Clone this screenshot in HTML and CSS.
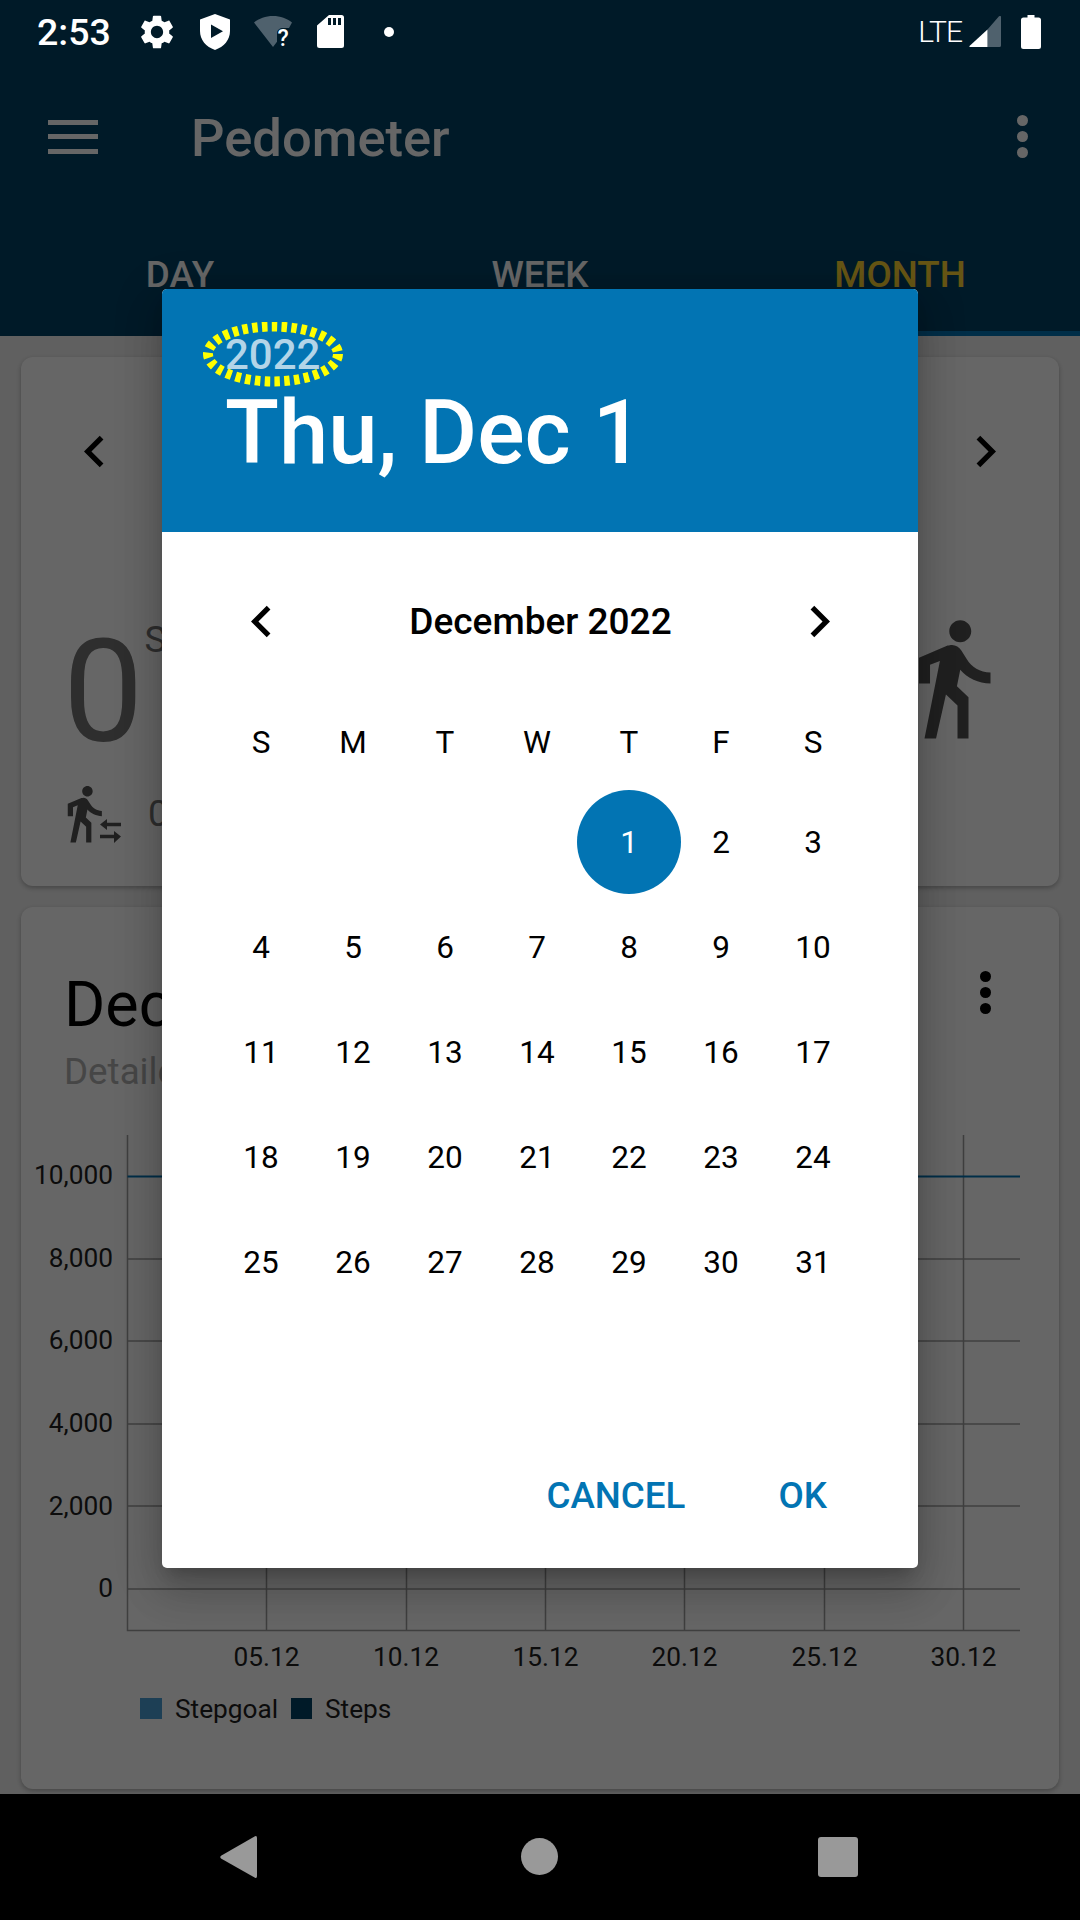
FILE: index.html
```html
<!DOCTYPE html>
<html lang="en">
<head>
<meta charset="utf-8">
<title>Pedometer</title>
<link rel="stylesheet" href="styles.css">
</head>
<body>
<div class="screen">
  <header class="appbar">
    <div class="status">
      <span class="clock">2:53</span>
      <svg class="st-gear" viewBox="2.6 2.6 18.8 18.8"><path fill="#fff" d="M19.14 12.94c.04-.3.06-.61.06-.94 0-.32-.02-.64-.07-.94l2.03-1.58c.18-.14.23-.41.12-.61l-1.92-3.32c-.12-.22-.37-.29-.59-.22l-2.39.96c-.5-.38-1.03-.7-1.62-.94l-.36-2.54c-.04-.24-.24-.41-.48-.41h-3.84c-.24 0-.43.17-.47.41l-.36 2.54c-.59.24-1.13.57-1.62.94l-2.39-.96c-.22-.08-.47 0-.59.22L2.74 8.87c-.12.21-.08.47.12.61l2.03 1.58c-.05.3-.09.63-.09.94s.02.64.07.94l-2.03 1.58c-.18.14-.23.41-.12.61l1.92 3.32c.12.22.37.29.59.22l2.39-.96c.5.38 1.03.7 1.62.94l.36 2.54c.05.24.24.41.48.41h3.84c.24 0 .44-.17.47-.41l.36-2.54c.59-.24 1.13-.56 1.62-.94l2.39.96c.22.08.47 0 .59-.22l1.92-3.32c.12-.22.07-.47-.12-.61l-2.01-1.58zM12 15.6c-1.98 0-3.6-1.62-3.6-3.6s1.62-3.6 3.6-3.6 3.6 1.62 3.6 3.6-1.62 3.6-3.6 3.6z"/></svg>
      <svg class="st-shield" viewBox="0 0 30 36"><path fill="#fff" fill-rule="evenodd" d="M15 0 30 5.5V17c0 9-6 15.700-15 19C6 32.700 0 26 0 17V5.500zM11 10.500V24l12-6.750z"/></svg>
      <svg class="st-wifi" viewBox="0 0 38 31"><path fill="#4f616d" d="M19 0C11.500 0 5 2.600 0 6.500L19 31l4-5.200V17c0-3 3-5 6-5h6L38 6.500C33 2.600 26.500 0 19 0z"/><text class="st-q" x="23.500" y="30">?</text></svg>
      <svg class="st-sd" viewBox="0 0 27 33"><path fill="#fff" fill-rule="evenodd" d="M12 0h12.500A2.500 2.500 0 0 1 27 2.500V30.500A2.500 2.500 0 0 1 24.500 33H2.500A2.500 2.500 0 0 1 0 30.500V10.500zM11 3v7h3V3zM16 3v7h3V3zM21 3v7h3V3z"/></svg>
      <span class="st-dot"></span>
      <span class="lte">LTE</span>
      <svg class="st-signal" viewBox="0 0 32 31"><path fill="#4f616d" d="M32 0V29.500A1.500 1.500 0 0 1 30.500 31H18.500V13.500L30 .3Q32-.6 32 1z"/><path fill="#fff" d="M18.500 13.500V31H1Q0 31 .5 30z"/></svg>
      <svg class="st-batt" viewBox="0 0 20 34"><path fill="#fff" d="M6.500 0h7v2.500h4A2.500 2.500 0 0 1 20 5v26.500a2.500 2.500 0 0 1-2.500 2.500h-15A2.500 2.500 0 0 1 0 31.500V5a2.500 2.500 0 0 1 2.500-2.500h4z"/></svg>
    </div>
    <div class="toolbar">
      <span class="burger"><i></i><i></i><i></i></span>
      <h1 class="title">Pedometer</h1>
      <span class="kebab kebab-light"><i></i><i></i><i></i></span>
    </div>
    <nav class="tabs">
      <span class="tab">DAY</span>
      <span class="tab">WEEK</span>
      <span class="tab tab-active">MONTH</span>
    </nav>
  </header>

  <main class="content">
    <section class="card card-summary">
      <div class="pager">
        <svg class="chev" viewBox="0 0 24 24"><path d="M15.410 7.410L14 6l-6 6 6 6 1.410-1.410L10.830 12z"/></svg>
        <svg class="chev" viewBox="0 0 24 24"><path d="M8.590 16.590L10 18l6-6-6-6-1.410 1.410L13.170 12z"/></svg>
      </div>
      <div class="summary">
        <div class="summary-main">
          <div class="count-row">
            <span class="count">0</span>
            <span class="count-unit">Steps</span>
          </div>
          <div class="distance-row">
            <svg class="walk-small" viewBox="0 0 72 63"><g transform="scale(2.625)"><path d="M13.500 5.500c1.100 0 2-.9 2-2s-.9-2-2-2-2 .9-2 2 .9 2 2 2zM9.800 8.900L7 23h2.100l1.800-8 2.100 2v6h2v-7.500l-2.100-2 .6-3C14.800 12 16.800 13 19 13v-2c-1.900 0-3.500-1-4.300-2.400l-1-1.600c-.4-.6-1-1-1.700-1-.3 0-.5.1-.8.1L6 8.300V13h2V9.600l1.800-.7"/></g><path d="M48 42.500 55 37v3.800H69v3.500H55V48zM69 54.500 62 49v3.800H48v3.500H62V61z"/></svg>
            <span class="distance">0 km</span>
          </div>
        </div>
        <svg class="walk-large" viewBox="0 0 24 24"><path d="M13.500 5.500c1.100 0 2-.9 2-2s-.9-2-2-2-2 .9-2 2 .9 2 2 2zM9.800 8.900L7 23h2.100l1.800-8 2.100 2v6h2v-7.500l-2.100-2 .6-3C14.800 12 16.800 13 19 13v-2c-1.900 0-3.500-1-4.300-2.400l-1-1.600c-.4-.6-1-1-1.700-1-.3 0-.5.1-.8.1L6 8.300V13h2V9.600l1.800-.7"/></svg>
      </div>
    </section>

    <section class="card card-chart">
      <div class="chart-head">
        <div>
          <h2 class="chart-title">December 2022</h2>
          <p class="chart-sub">Detailed overview</p>
        </div>
        <span class="kebab kebab-dark"><i></i><i></i><i></i></span>
      </div>
      <svg class="chart" viewBox="21 1120 1038 620">
        <g class="grid">
          <path d="M127.500 1259H1020M127.500 1341H1020M127.500 1424H1020M127.500 1506H1020M127.500 1589H1020"/>
          <path d="M266.500 1135V1630M406.500 1135V1630M545.500 1135V1630M684.500 1135V1630M824.500 1135V1630M963.500 1135V1630"/>
          <path d="M127.500 1135V1630.500H1020"/>
        </g>
        <path class="goal" d="M127.500 1176.500H1020"/>
        <g class="axis-y">
          <text x="113" y="1184">10,000</text>
          <text x="113" y="1267">8,000</text>
          <text x="113" y="1349">6,000</text>
          <text x="113" y="1432">4,000</text>
          <text x="113" y="1515">2,000</text>
          <text x="113" y="1597">0</text>
        </g>
        <g class="axis-x">
          <text x="266.500" y="1666">05.12</text>
          <text x="406" y="1666">10.12</text>
          <text x="545.500" y="1666">15.12</text>
          <text x="684.500" y="1666">20.12</text>
          <text x="824.500" y="1666">25.12</text>
          <text x="963.500" y="1666">30.12</text>
        </g>
        <rect class="lg-goal" x="140" y="1698" width="22" height="21"/>
        <text class="lg" x="175" y="1718">Stepgoal</text>
        <rect class="lg-steps" x="291" y="1698" width="21" height="21"/>
        <text class="lg" x="325" y="1718">Steps</text>
      </svg>
    </section>
  </main>

  <div class="scrim"></div>

  <div class="dialog" role="dialog">
    <div class="dlg-head">
      <span class="dlg-year">2022</span>
      <span class="dlg-date">Thu, Dec 1</span>
      <svg class="dlg-mark" viewBox="0 0 140 65"><ellipse cx="70" cy="32" rx="65" ry="27.500"/></svg>
    </div>
    <div class="dlg-body">
      <div class="cal-head">
        <svg class="chev" viewBox="0 0 24 24"><path d="M15.410 7.410L14 6l-6 6 6 6 1.410-1.410L10.830 12z"/></svg>
        <span class="cal-month">December 2022</span>
        <svg class="chev" viewBox="0 0 24 24"><path d="M8.590 16.590L10 18l6-6-6-6-1.410 1.410L13.170 12z"/></svg>
      </div>
      <div class="cal-grid">
        <span class="cell">S</span><span class="cell">M</span><span class="cell">T</span><span class="cell">W</span><span class="cell">T</span><span class="cell">F</span><span class="cell">S</span>
        <span class="cell"></span><span class="cell"></span><span class="cell"></span><span class="cell"></span><span class="cell"><b class="sel">1</b></span><span class="cell">2</span><span class="cell">3</span>
        <span class="cell">4</span><span class="cell">5</span><span class="cell">6</span><span class="cell">7</span><span class="cell">8</span><span class="cell">9</span><span class="cell">10</span>
        <span class="cell">11</span><span class="cell">12</span><span class="cell">13</span><span class="cell">14</span><span class="cell">15</span><span class="cell">16</span><span class="cell">17</span>
        <span class="cell">18</span><span class="cell">19</span><span class="cell">20</span><span class="cell">21</span><span class="cell">22</span><span class="cell">23</span><span class="cell">24</span>
        <span class="cell">25</span><span class="cell">26</span><span class="cell">27</span><span class="cell">28</span><span class="cell">29</span><span class="cell">30</span><span class="cell">31</span>
      </div>
      <div class="dlg-actions">
        <span class="btn btn-cancel">CANCEL</span>
        <span class="btn">OK</span>
      </div>
    </div>
  </div>

  <footer class="navbar">
    <svg class="nav-back" viewBox="0 0 37 42"><path d="M35 0.300Q37-.5 37 2V40Q37 42.500 35 41.700L1 22.500Q-.5 21 1 19.700z"/></svg>
    <span class="nav-home"></span>
    <span class="nav-recent"></span>
  </footer>
</div>
</body>
</html>
```

FILE: styles.css
```css
* { box-sizing: border-box; }
html, body { margin: 0; padding: 0; }
body { font-family: Roboto, "Liberation Sans", sans-serif; background: #000; }
h1, h2, p { margin: 0; font-weight: inherit; }

.screen {
  position: relative;
  width: 1080px;
  height: 1920px;
  overflow: hidden;
  display: flex;
  flex-direction: column;
  background: #f0f0f0;
}

/* app bar */
.appbar { height: 336px; background: #004165; flex: none; display: flex; flex-direction: column; }
.status {
  position: relative;
  z-index: 3;
  height: 63px;
  flex: none;
  display: flex;
  align-items: center;
  padding: 0 39px 0 37px;
  color: #fff;
}
.clock { font-size: 37.500px; font-weight: 500; width: 71px; white-space: nowrap; }
.st-gear { width: 32px; height: 34px; margin-left: 33px; }
.st-shield { width: 30px; height: 36px; margin-left: 27px; }
.st-wifi { width: 38px; height: 31px; margin-left: 24px; }
.st-q { font-size: 23px; font-weight: 500; fill: #fff; }
.st-sd { width: 27px; height: 33px; margin-left: 25px; }
.st-dot { width: 10px; height: 10px; border-radius: 50%; background: #fff; margin-left: 40px; }
.lte { margin-left: auto; font-size: 30px; font-weight: 300; line-height: 1; letter-spacing: -1px; }
.st-signal { width: 32px; height: 31px; margin-left: 7px; }
.st-batt { width: 20px; height: 34px; margin-left: 20px; }

.toolbar { height: 147px; flex: none; display: flex; align-items: center; padding: 0 52px 0 48px; color: #fff; }
.burger { width: 50px; height: 34px; display: flex; flex-direction: column; justify-content: space-between; }
.burger i { display: block; height: 5px; background: #fff; }
.title { font-size: 52.500px; font-weight: 500; margin: 2px 0 0 93px; flex: 1; }
.kebab { display: flex; flex-direction: column; gap: 5px; }
.kebab i { display: block; width: 11px; height: 11px; border-radius: 50%; }
.kebab-light i { background: #fff; }
.kebab-dark i { background: #000; }

.tabs { height: 126px; flex: none; display: flex; }
.tab {
  flex: 1;
  display: flex;
  align-items: center;
  justify-content: center;
  padding-top: 7px;
  font-size: 36.750px;
  font-weight: 500;
  color: #fff;
  border-bottom: 5px solid transparent;
}
.tab-active { color: #ffd433; border-bottom-color: #0274b3; }

/* content behind the scrim */
.content { flex: 1; min-height: 0; display: flex; flex-direction: column; gap: 21px; padding: 21px 21px 5px; }
.card { background: #fff; border-radius: 12px; box-shadow: 0 2px 5px rgba(0, 0, 0, .28); }
.card-summary { height: 529px; flex: none; }
.card-chart { flex: 1; min-height: 0; }

.pager { display: flex; justify-content: space-between; padding: 63px 42.500px 0 42px; }
.chev { width: 63px; height: 63px; display: block; flex: none; fill: #000; }
.summary { display: flex; justify-content: space-between; padding: 129px 41px 0 31px; }
.summary-main { display: flex; flex-direction: column; }
.count-row { display: flex; height: 170px; }
.count { font-size: 143px; line-height: 161px; color: #737373; margin-left: 11px; }
.count-unit { font-size: 36.750px; color: #737373; margin-left: 1px; line-height: 55px; }
.distance-row { display: flex; align-items: center; }
.walk-small { width: 72px; height: 63px; fill: #525252; }
.distance { font-size: 36.750px; color: #737373; margin-left: 24px; }
.walk-large { width: 132px; height: 132px; fill: #525252; }

.chart-head { height: 213px; display: flex; justify-content: space-between; padding: 60px 68.500px 0 43px; }
.chart-title { font-size: 63px; line-height: 76px; color: #000; white-space: nowrap; }
.chart-sub { font-size: 36.750px; line-height: 50px; margin-top: 3.500px; color: #b0b0b0; white-space: nowrap; }
.kebab-dark { margin-top: 3.500px; }
.chart { display: block; width: 1038px; height: 620px; }
.grid path { fill: none; stroke: #9e9e9e; stroke-width: 1.500; }
.goal { fill: none; stroke: #0274b3; stroke-width: 2; }
.axis-y text { font-size: 26.250px; text-anchor: end; fill: #1e1e1e; }
.axis-x text { font-size: 26.250px; text-anchor: middle; fill: #1e1e1e; }
.lg { font-size: 26.250px; fill: #1e1e1e; }
.lg-goal { fill: #4a9fd4; }
.lg-steps { fill: #004165; }

.scrim { position: absolute; left: 0; right: 0; top: 0; bottom: 126px; background: rgba(0, 0, 0, .6); z-index: 1; }

/* dialog */
.dialog {
  position: absolute;
  z-index: 2;
  left: 162px;
  top: 289px;
  width: 756px;
  height: 1279px;
  background: #fff;
  border-radius: 5px;
  display: flex;
  flex-direction: column;
  box-shadow: 0 24px 38px 3px rgba(0, 0, 0, .14), 0 9px 46px 8px rgba(0, 0, 0, .12), 0 11px 15px -7px rgba(0, 0, 0, .2);
}
.dlg-head {
  position: relative;
  height: 243px;
  flex: none;
  background: #0274b3;
  border-radius: 5px 5px 0 0;
  padding: 41px 0 0 63px;
  display: flex;
  flex-direction: column;
}
.dlg-year { font-size: 42px; line-height: 50px; font-weight: 500; color: #b3d5e8; }
.dlg-date { font-size: 88.600px; line-height: 106px; font-weight: 500; color: #fff; white-space: nowrap; }
.dlg-mark { position: absolute; left: 41px; top: 33px; width: 140px; height: 65px; }
.dlg-mark ellipse { fill: none; stroke: #ff0; stroke-width: 10; stroke-dasharray: 5.500 4.300; }

.dlg-body { flex: 1; display: flex; flex-direction: column; min-height: 0; }
.cal-head { display: flex; align-items: center; justify-content: space-between; padding: 58px 67px 0 68px; }
.cal-month { font-size: 37px; font-weight: 500; color: #000; }
.cal-grid {
  display: grid;
  grid-template-columns: repeat(7, 92px);
  grid-template-rows: 96px repeat(5, 105px);
  margin: 41px 0 0 53px;
}
.cell { display: flex; align-items: center; justify-content: center; font-size: 31.500px; color: #000; }
.sel {
  flex: none;
  width: 104px;
  height: 104px;
  margin-top: -1px;
  padding-top: 1px;
  border-radius: 50%;
  background: #0274b3;
  color: #fff;
  font-weight: 400;
  display: flex;
  align-items: center;
  justify-content: center;
}
.dlg-actions { margin-top: auto; display: flex; justify-content: flex-end; padding: 0 91px 47.500px 0; }
.btn { font-size: 36.750px; font-weight: 500; color: #0274b3; line-height: 50px; }
.btn-cancel { margin-right: 93px; }

/* nav */
.navbar { position: relative; z-index: 3; height: 126px; flex: none; background: #000; }
.nav-back { position: absolute; left: 220px; top: 42px; width: 37px; height: 42px; fill: #999; }
.nav-home { position: absolute; left: 521px; top: 44px; width: 37px; height: 37px; border-radius: 50%; background: #999; }
.nav-recent { position: absolute; left: 818px; top: 43px; width: 40px; height: 40px; border-radius: 3px; background: #999; }
```
